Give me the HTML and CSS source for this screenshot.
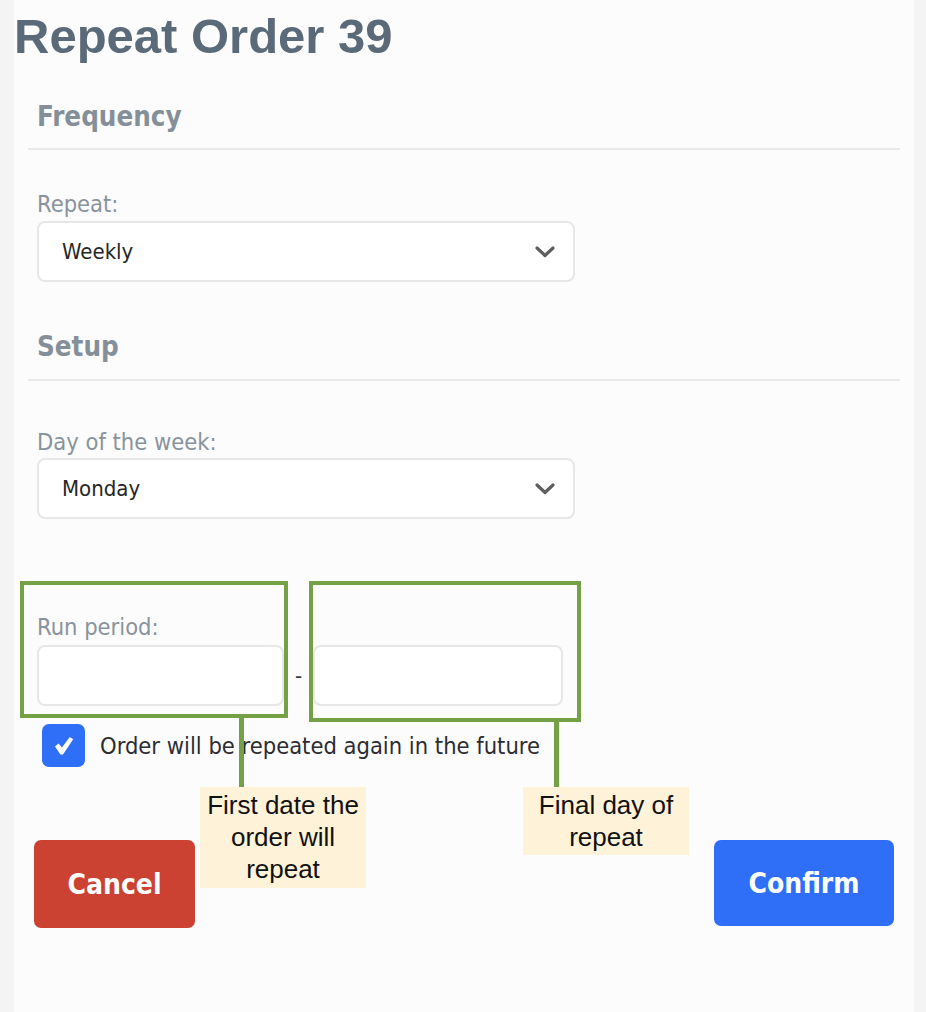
FILE: index.html
```html
<!DOCTYPE html>
<html lang="en">
<head>
<meta charset="utf-8">
<title>Repeat Order 39</title>
<link rel="stylesheet" href="styles.css">
</head>
<body>
<main class="panel">
  <h1 class="page-title">Repeat Order 39</h1>

  <section class="group">
    <h2 class="group-title group-title--first">Frequency</h2>
    <div class="group-rule group-rule--first"></div>
    <div class="group-body">
      <div class="field-label field-label--repeat">Repeat:</div>
      <div class="select select--repeat">
        <span class="select-value">Weekly</span>
        <svg class="chevron" width="20" height="12" viewBox="0 0 20 12"><path d="M2 2 L10 9.5 L18 2" fill="none" stroke="#5e5e5e" stroke-width="3.2" stroke-linecap="round" stroke-linejoin="round"/></svg>
      </div>
    </div>
  </section>

  <section class="group">
    <h2 class="group-title group-title--second">Setup</h2>
    <div class="group-rule group-rule--second"></div>
    <div class="group-body">
      <div class="field-label field-label--day">Day of the week:</div>
      <div class="select select--day">
        <span class="select-value">Monday</span>
        <svg class="chevron" width="20" height="12" viewBox="0 0 20 12"><path d="M2 2 L10 9.5 L18 2" fill="none" stroke="#5e5e5e" stroke-width="3.2" stroke-linecap="round" stroke-linejoin="round"/></svg>
      </div>

      <div class="field-label field-label--run">Run period:</div>
      <div class="run-row">
        <div class="text-input"></div>
        <span class="run-dash">-</span>
        <div class="text-input text-input--end"></div>
      </div>

      <div class="check-row">
        <span class="checkbox">
          <svg width="20" height="20" viewBox="0 0 20 20"><path d="M1 10.6 L4.6 7.6 L7.9 11.4 L15.8 1 L19.2 3.2 L9 18.6 L6.4 18.6 Z" fill="#ffffff"/></svg>
        </span>
        <span class="check-text">Order will be repeated again in the future</span>
      </div>
    </div>
  </section>

  <div class="actions">
    <button class="btn btn--cancel" type="button">Cancel</button>
    <button class="btn btn--confirm" type="button">Confirm</button>
  </div>

  <div class="callout-box callout-box--start"></div>
  <div class="callout-box callout-box--end"></div>
  <div class="callout-line callout-line--start"></div>
  <div class="callout-line callout-line--end"></div>
  <div class="note note--start">First date the<br>order will<br>repeat</div>
  <div class="note note--end">Final day of<br>repeat</div>
</main>
</body>
</html>
```

FILE: styles.css
```css
* { box-sizing: border-box; }

html, body {
  margin: 0;
  padding: 0;
  background: #f4f4f4;
}

body {
  font-family: "DejaVu Sans Condensed", "DejaVu Sans", sans-serif;
  width: 926px;
  height: 1012px;
  overflow: hidden;
}

.panel {
  position: relative;
  margin-left: 14px;
  width: 900px;
  height: 1012px;
  background: #fcfcfc;
  padding-top: 8px;
}

.page-title {
  margin: 0;
  font-family: "Liberation Sans", Arial, sans-serif;
  font-weight: 700;
  font-size: 49px;
  line-height: 56px;
  color: #5b6a79;
}

.group-title {
  margin: 0;
  padding-left: 23px;
  font-family: "DejaVu Sans Condensed", "DejaVu Sans", sans-serif;
  font-weight: 700;
  font-size: 27.5px;
  line-height: 32px;
  color: #858f9a;
}
.group-title--first { margin-top: 36px; }
.group-title--second { margin-top: 48px; }

.group-rule {
  margin: 0 14px;
  height: 2px;
  background: #e8e8e8;
}
.group-rule--first { margin-top: 16px; }
.group-rule--second { margin-top: 17px; }

.group-body {
  padding-left: 23px;
}

.field-label {
  font-size: 23.5px;
  line-height: 26px;
  color: #89939d;
}
.field-label--repeat { margin-top: 41px; margin-bottom: 4px; }
.field-label--day { margin-top: 48px; margin-bottom: 3px; }
.field-label--run { margin-top: 95px; margin-bottom: 5px; }

.select {
  display: flex;
  align-items: center;
  justify-content: space-between;
  width: 538px;
  height: 61px;
  padding: 0 18px 0 23px;
  background: #ffffff;
  border: 2px solid #e7e7e7;
  border-radius: 8px;
}

.select-value {
  font-size: 22px;
  color: #262626;
}

.chevron { display: block; }

.run-row {
  display: flex;
  align-items: center;
}

.text-input {
  width: 247px;
  height: 61px;
  background: #ffffff;
  border: 2px solid #e7e7e7;
  border-radius: 8px;
}
.text-input--end { width: 250px; }

.run-dash {
  width: 29px;
  text-align: center;
  font-size: 22px;
  color: #333333;
}

.check-row {
  display: flex;
  align-items: center;
  margin-top: 18px;
  padding-left: 5px;
}

.checkbox {
  display: flex;
  align-items: center;
  justify-content: center;
  width: 43px;
  height: 43px;
  border-radius: 7px;
  background: #2f6ef6;
}

.check-text {
  margin-left: 15px;
  font-size: 23.5px;
  color: #2c2c31;
}

.actions {
  display: flex;
  justify-content: space-between;
  align-items: flex-start;
  margin-top: 73px;
  padding: 0 20px;
}

.btn {
  border: none;
  border-radius: 7px;
  color: #ffffff;
  font-family: "DejaVu Sans Condensed", "DejaVu Sans", sans-serif;
  font-weight: 700;
  font-size: 28px;
  cursor: pointer;
}
.btn--cancel {
  width: 161px;
  height: 88px;
  background: #cb4232;
}
.btn--confirm {
  width: 180px;
  height: 86px;
  background: #2f6ef6;
}

/* annotation overlays */
.callout-box {
  position: absolute;
  border: 4px solid #75a146;
}
.callout-box--start { left: 6px; top: 581px; width: 268px; height: 137px; }
.callout-box--end { left: 295px; top: 581px; width: 272px; height: 141px; }

.callout-line {
  position: absolute;
  width: 5px;
  background: #75a146;
}
.callout-line--start { left: 225px; top: 717px; height: 70px; }
.callout-line--end { left: 540px; top: 721px; height: 66px; }

.note {
  position: absolute;
  width: 166px;
  padding: 2px 0;
  background: #fef2d8;
  font-family: "Liberation Sans", Arial, sans-serif;
  font-size: 26px;
  line-height: 32px;
  text-align: center;
  color: #111111;
}
.note--start { left: 186px; top: 787px; height: 101px; }
.note--end { left: 509px; top: 787px; height: 68px; }
```
